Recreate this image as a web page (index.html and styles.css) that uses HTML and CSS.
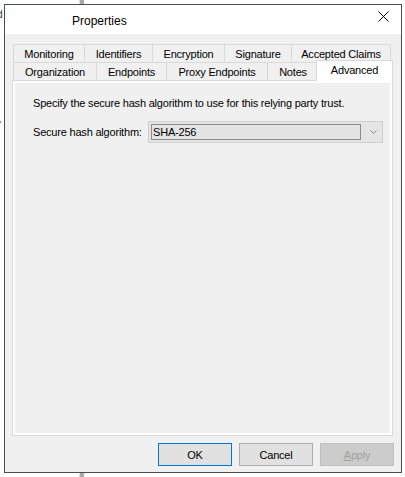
FILE: index.html
```html
<!DOCTYPE html>
<html>
<head>
<meta charset="utf-8">
<link rel="stylesheet" href="styles.css">
</head>
<body>
<div class="bg-mark mark-d">d</div>
<div class="bg-mark mark-y">y</div>
<div class="bg-line line-top"></div>
<div class="bg-line line-bottom"></div>
<div class="window">
  <div class="titlebar">
    <span class="title">Properties</span>
    <svg class="close" width="11" height="11" viewBox="0 0 11 11"><path d="M0.5 0.5 L10.5 10.5 M10.5 0.5 L0.5 10.5" stroke="#000" stroke-width="1" fill="none"/></svg>
  </div>
  <div class="client">
    <div class="tabs">
      <div class="tab-row">
        <div class="tab w71">Monitoring</div>
        <div class="tab w68">Identifiers</div>
        <div class="tab w72">Encryption</div>
        <div class="tab w67">Signature</div>
        <div class="tab w100 last">Accepted Claims</div>
      </div>
      <div class="tab-row">
        <div class="tab w83">Organization</div>
        <div class="tab w70">Endpoints</div>
        <div class="tab w101">Proxy Endpoints</div>
        <div class="tab w51">Notes</div>
        <div class="tab w73 last selected">Advanced</div>
      </div>
    </div>
    <div class="panel">
      <div class="panel-inner">
        <p class="desc">Specify the secure hash algorithm to use for this relying party trust.</p>
        <div class="field-row">
          <span class="label">Secure hash algorithm:</span>
          <div class="combo">
            <div class="combo-value">SHA-256</div>
            <svg class="chevron" width="7" height="4" viewBox="0 0 7 4"><path d="M0.5 0.5 L3.5 3.5 L6.5 0.5" stroke="#8a8a8a" stroke-width="1" fill="none"/></svg>
          </div>
        </div>
      </div>
    </div>
    <div class="buttons">
      <div class="btn default">OK</div>
      <div class="btn">Cancel</div>
      <div class="btn disabled"><u>A</u>pply</div>
    </div>
  </div>
</div>
</body>
</html>
```

FILE: styles.css
```css
html, body {
  margin: 0;
  padding: 0;
  background: #ffffff;
}
body {
  position: relative;
  width: 405px;
  height: 477px;
  overflow: hidden;
  font-family: "Liberation Sans", Arial, sans-serif;
  font-size: 11px;
  letter-spacing: -0.2px;
  color: #000;
}
.bg-mark {
  position: absolute;
  left: -3px;
  font-size: 10px;
  color: #333;
}
.mark-d { top: 9px; }
.mark-y { top: 118px; font-size: 8px; }
.bg-line {
  position: absolute;
  left: 79px;
  width: 4px;
  background: #a8a8a8;
  border-left: 1px solid #e0e0e0;
}
.line-top { top: 0; height: 4px; }
.line-bottom { top: 472px; height: 5px; }
.window {
  position: relative;
  margin: 4px 0 0 4px;
  width: 398px;
  height: 469px;
  box-sizing: border-box;
  border: 1px solid #4d4d4d;
  background: #f0f0f0;
  display: flex;
  flex-direction: column;
}
.titlebar {
  height: 29px;
  background: #ffffff;
  display: flex;
  align-items: center;
  padding-left: 67px;
  padding-right: 12px;
}
.title {
  font-family: "Liberation Sans", Arial, sans-serif;
  font-size: 12px;
  letter-spacing: 0;
  flex: 1;
  position: relative;
  top: 1px;
}
.close {
  display: block;
  position: relative;
  top: -3px;
}
.client {
  flex: 1;
  padding: 10px 0 0 7px;
  display: flex;
  flex-direction: column;
}
.tabs {
  display: flex;
  flex-direction: column;
  margin-left: 1px;
}
.tab-row {
  display: flex;
  height: 18px;
}
.tab {
  box-sizing: border-box;
  height: 18px;
  border-top: 1px solid #d9d9d9;
  border-left: 1px solid #d9d9d9;
  background: #f0f0f0;
  display: flex;
  align-items: center;
  justify-content: center;
  white-space: nowrap;
  padding-top: 1px;
}
.tab.last { border-right: 1px solid #d9d9d9; }
.tab.selected {
  position: relative;
  z-index: 2;
  background: #ffffff;
  height: 21px;
  margin: -2px -2px -1px -2px;
  width: 77px;
  padding-top: 0;
  padding-bottom: 3px;
}
.w51 { width: 51px; }
.w67 { width: 67px; }
.w68 { width: 68px; }
.w70 { width: 70px; }
.w71 { width: 71px; }
.w72 { width: 72px; }
.w73 { width: 73px; }
.w83 { width: 83px; }
.w100 { width: 100px; }
.w101 { width: 101px; }
.panel {
  position: relative;
  z-index: 1;
  width: 381px;
  height: 356px;
  box-sizing: border-box;
  border: 1px solid #d9d9d9;
  background: #ffffff;
  padding: 2px;
}
.panel-inner {
  height: 100%;
  background: #f0f0f0;
  padding: 14px 0 0 18px;
  box-sizing: border-box;
}
.desc {
  margin: 0;
  line-height: 13px;
}
.field-row {
  display: flex;
  align-items: center;
  margin-top: 11px;
}
.label {
  width: 115px;
  white-space: nowrap;
}
.combo {
  box-sizing: border-box;
  width: 235px;
  height: 22px;
  border: 1px solid #cccccc;
  background: #e5e5e5;
  display: flex;
  align-items: center;
  padding: 0 5px 0 2px;
}
.combo-value {
  box-sizing: border-box;
  width: 212px;
  height: 16px;
  border: 1px solid #8c8c8c;
  background: #e3e3e3;
  line-height: 14px;
  padding-left: 1px;
}
.chevron {
  display: block;
  margin-left: 9px;
}
.buttons {
  display: flex;
  justify-content: flex-end;
  gap: 7px;
  margin-top: 7px;
  padding-right: 7px;
}
.btn {
  box-sizing: border-box;
  width: 74px;
  height: 23px;
  border: 1px solid #adadad;
  background: #e1e1e1;
  display: flex;
  align-items: center;
  justify-content: center;
}
.btn.default {
  border-color: #0078d7;
}
.btn.disabled {
  background: #cccccc;
  border-color: #bfbfbf;
  color: #a0a0a0;
}
```
